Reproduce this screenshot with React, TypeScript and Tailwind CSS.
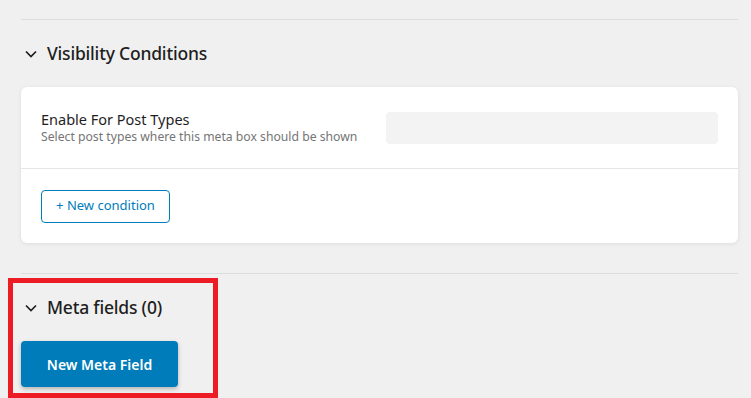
import React from "react";

function Chevron() {
  return (
    <svg width="12" height="12" viewBox="0 0 12 12" className="mr-[10px] shrink-0">
      <polyline points="1,3.5 6,8.5 11,3.5" fill="none" stroke="#1e1e1e" strokeWidth="1.7" />
    </svg>
  );
}

export default function App() {
  return (
    <div
      className="relative w-[751px] h-[398px] overflow-hidden bg-[#f0f0f0] text-[#1e1e1e]"
      style={{ fontFamily: '"Noto Sans", "Open Sans", sans-serif' }}
    >
      <div className="px-[21px] pr-[13px]">
        <div className="h-[19px]" />
        <div className="border-t border-[#dcdcdc]" />
        <div className="h-[67px] flex items-center pl-[4px]">
          <Chevron />
          <span className="text-[17.5px] font-medium tracking-[-0.2px]">Visibility Conditions</span>
        </div>
        <div className="bg-white rounded-[6px] shadow-[0_1px_4px_rgba(0,0,0,0.08)]">
          <div className="h-[81px] flex items-center justify-between px-[20px]">
            <div className="flex flex-col">
              <span className="text-[14.5px] leading-[18px] text-[#1e1e1e]">Enable For Post Types</span>
              <span className="text-[12.2px] leading-[18px] text-[#757575]">
                Select post types where this meta box should be shown
              </span>
            </div>
            <div className="w-[332px] h-[32px] rounded-[4px] bg-[#f3f3f3]" />
          </div>
          <div className="border-t border-[#e6e6e6]" />
          <div className="h-[74px] flex items-center px-[20px]">
            <button className="h-[33px] w-[129px] rounded-[4px] border border-[#007cba] text-[#007cba] text-[13px] bg-white">
              + New condition
            </button>
          </div>
        </div>
        <div className="h-[30px]" />
        <div className="border-t border-[#dcdcdc]" />
        <div className="h-[67px] flex items-center pl-[4px]">
          <Chevron />
          <span className="text-[17.5px] font-medium tracking-[-0.2px]">Meta fields (0)</span>
        </div>
        <button className="h-[46px] w-[157px] rounded-[4px] bg-[#007cba] text-white text-[14px] font-semibold shadow-[0_2px_4px_rgba(0,0,0,0.25)]">
          New Meta Field
        </button>
      </div>
      <div className="absolute left-[8px] top-[278px] w-[210px] h-[120px] border-[5px] border-[#ed1c24] pointer-events-none" />
    </div>
  );
}
